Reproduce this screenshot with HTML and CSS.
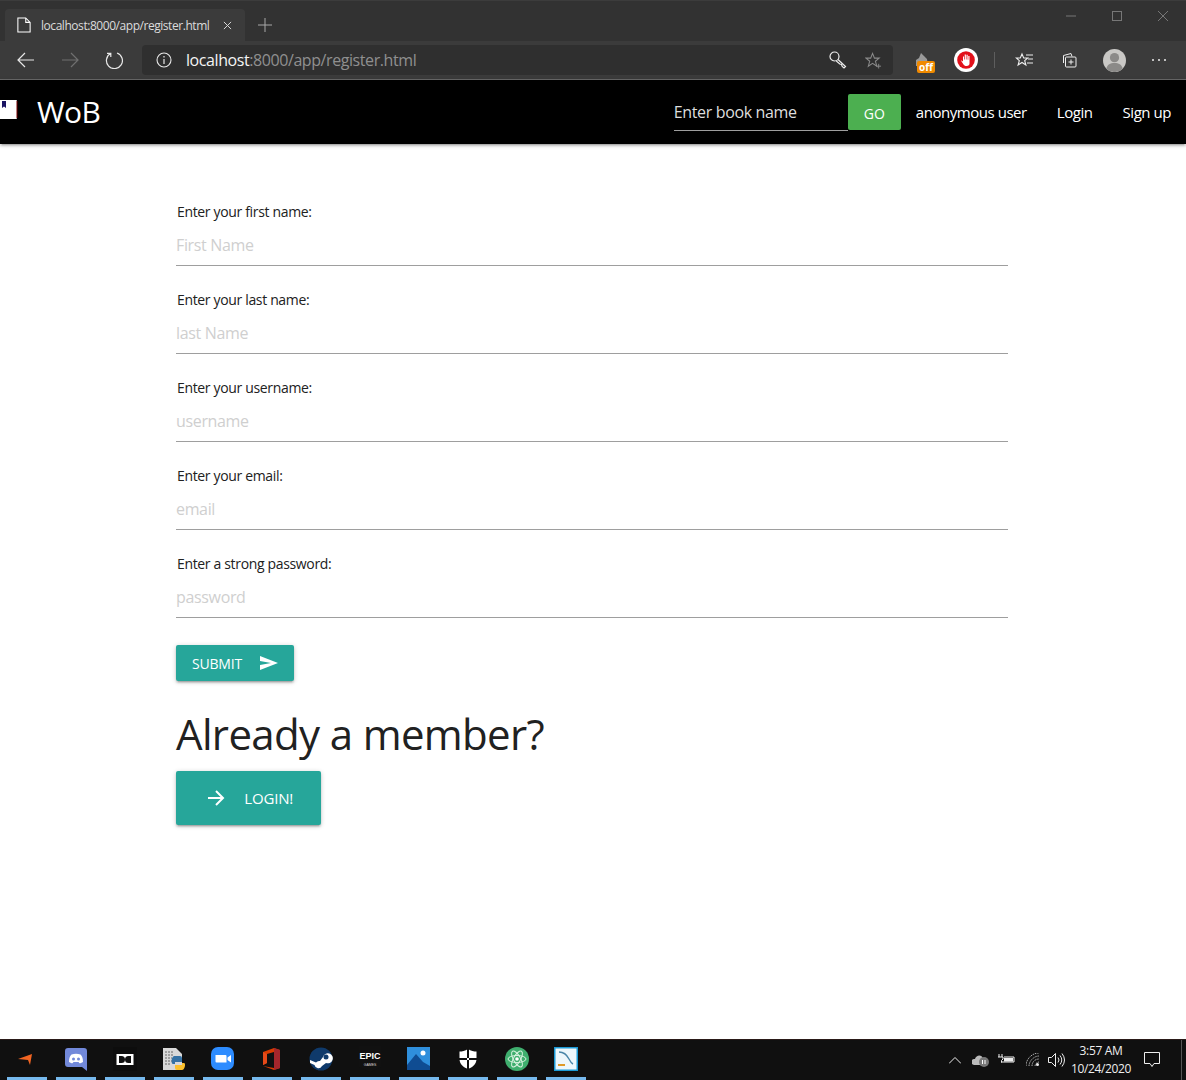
FILE: index.html
```html
<!DOCTYPE html>
<html lang="en">
<head>
<meta charset="utf-8">
<title>WoB</title>
<link rel="stylesheet" href="styles.css">
</head>
<body>
<div class="screen">
  <header class="browser">
    <div class="tabstrip">
      <div class="tab">
        <svg class="ic16" viewBox="0 0 16 18" width="14" height="16"><path d="M1 1h9l5 5v11H1z M10 1v5h5" fill="none" stroke="#fff" stroke-width="1.2"/></svg>
        <span class="tab-title">localhost:8000/app/register.html</span>
        <svg viewBox="0 0 10 10" width="9" height="9"><path d="M1 1l8 8M9 1l-8 8" stroke="#d8d8d8" stroke-width="1.1"/></svg>
      </div>
      <svg class="newtab" viewBox="0 0 14 14" width="14" height="14"><path d="M7 0v14M0 7h14" stroke="#a8a8a8" stroke-width="1"/></svg>
      <div class="winctl">
        <svg viewBox="0 0 10 10" width="10" height="10"><path d="M0 5h10" stroke="#777"/></svg>
        <svg viewBox="0 0 10 10" width="10" height="10"><rect x=".5" y=".5" width="9" height="9" fill="none" stroke="#777"/></svg>
        <svg viewBox="0 0 10 10" width="10" height="10"><path d="M0 0l10 10M10 0L0 10" stroke="#777"/></svg>
      </div>
    </div>
    <div class="toolbar">
      <svg class="navbtn" viewBox="0 0 18 16" width="18" height="16"><path d="M17 8H1M8 1L1 8l7 7" fill="none" stroke="#e8e8e8" stroke-width="1.2"/></svg>
      <svg class="navbtn" viewBox="0 0 18 16" width="18" height="16"><path d="M1 8h16M10 1l7 7-7 7" fill="none" stroke="#707070" stroke-width="1.2"/></svg>
      <svg class="navbtn" viewBox="0 0 18 18" width="18" height="18"><path d="M5.5 2.6A8 8 0 1 0 12 2M5.8 6V2.4H2" fill="none" stroke="#e8e8e8" stroke-width="1.2"/></svg>
      <div class="omnibox">
        <svg viewBox="0 0 16 16" width="16" height="16"><circle cx="8" cy="8" r="7" fill="none" stroke="#e8e8e8" stroke-width="1.1"/><path d="M8 7v5M8 4v1.5" stroke="#e8e8e8" stroke-width="1.2"/></svg>
        <span class="url"><span class="host">localhost</span>:8000/app/register.html</span>
        <svg class="key" viewBox="0 0 18 18" width="18" height="18"><circle cx="5.5" cy="5.5" r="4.5" fill="none" stroke="#eee" stroke-width="1.2"/><path d="M9 8.5l7.5 7-1.5 1.5-1.8-1.5-.7-2-1.7-.5-3.5-3" fill="none" stroke="#eee" stroke-width="1.2"/></svg>
        <svg class="star" viewBox="0 0 18 18" width="17" height="17"><path d="M8 1.5l2 5h5l-4 3.3 1.5 5.2L8 12l-4.500 3 1.500-5.200L1 6.500h5z" fill="none" stroke="#8a8a8a" stroke-width="1.100"/><path d="M12 15h5M14.500 12.500v5" stroke="#8a8a8a"/></svg>
      </div>
      <div class="ext-off">
        <svg viewBox="0 0 18 14" width="18" height="14"><path d="M2 13V7l3-2 2-5 3 3 3 3 1 7z" fill="#9a9a9a"/></svg>
        <span class="off-badge">off</span>
      </div>
      <svg class="ext-block" viewBox="0 0 24 24" width="24" height="24"><circle cx="12" cy="12" r="12" fill="#fff"/><circle cx="12" cy="12" r="8.800" fill="#e2101a"/><path d="M7.500 12.500l1.500 1V8.500h1v3h.7V6.500h1.200v5h.6V6.800h1.200v5h.6V8h1.200v7.500c0 1.500-1 2.500-3 2.500-2.500 0-3-1.500-5.500-5.500z" fill="#fff"/></svg>
      <span class="sep"></span>
      <svg class="favs" viewBox="0 0 18 16" width="18" height="16"><path d="M7 2l1.700 4h4l-3 2.700 1.200 4.300L7 10.500 3.100 13l1.200-4.300-3-2.700h4z" fill="none" stroke="#eee" stroke-width="1.100"/><path d="M11 3h7M13 7h5M12 11h6" stroke="#eee"/></svg>
      <svg class="colls" viewBox="0 0 16 16" width="16" height="16"><path d="M2.500 11V3.500L10 1.500l1 3" fill="none" stroke="#eee"/><rect x="4.500" y="5" width="10.500" height="10" rx="1" fill="#3b3b3b" stroke="#eee"/><path d="M10 7.500v5M7.500 10h5" stroke="#eee"/></svg>
      <svg class="avatar" viewBox="0 0 24 24" width="23" height="23"><circle cx="12" cy="12" r="12" fill="#c9c8c5"/><circle cx="12" cy="9" r="4.800" fill="#8b8a88"/><path d="M3.500 20.500c1-4.500 4-6 8.500-6s7.500 1.500 8.500 6a12 12 0 0 1-17 0z" fill="#8b8a88"/></svg>
      <svg class="more" viewBox="0 0 16 4" width="16" height="4"><circle cx="2" cy="2" r="1" fill="#eee"/><circle cx="8" cy="2" r="1" fill="#eee"/><circle cx="14" cy="2" r="1" fill="#eee"/></svg>
    </div>
  </header>

  <nav class="navbar">
    <div class="brand">
      <svg viewBox="0 0 18 20" width="18" height="20"><path d="M0 1h16a1 1 0 0 1 1 1v17a1 1 0 0 1-1 1H0z" fill="#fff"/><path d="M17 2v17" stroke="#7a0000"/><path d="M2 2h4v7L4 7.500 2 9z" fill="#1b1464"/></svg>
      <span class="brand-name">WoB</span>
    </div>
    <div class="nav-right">
      <input class="search" type="text" placeholder="Enter book name">
      <button class="go" type="button">GO</button>
      <a class="nav-link" href="#">anonymous user</a>
      <a class="nav-link" href="#">Login</a>
      <a class="nav-link" href="#">Sign up</a>
    </div>
  </nav>

  <main class="content">
    <form class="form">
      <label class="field"><span class="lbl">Enter your first name:</span><input type="text" placeholder="First Name"></label>
      <label class="field"><span class="lbl">Enter your last name:</span><input type="text" placeholder="last Name"></label>
      <label class="field"><span class="lbl">Enter your username:</span><input type="text" placeholder="username"></label>
      <label class="field"><span class="lbl">Enter your email:</span><input type="text" placeholder="email"></label>
      <label class="field"><span class="lbl">Enter a strong password:</span><input type="password" placeholder="password"></label>
      <button class="btn submit" type="button">SUBMIT
        <svg viewBox="0 0 18 14" width="18" height="14"><path d="M0 0l18 7-18 7 0-5 11-2L0 5z" fill="#fff"/></svg>
      </button>
    </form>
    <h2 class="member">Already a member?</h2>
    <button class="btn login" type="button">
      <svg viewBox="0 0 18 16" width="18" height="16"><path d="M1 8h15M9 1l7 7-7 7" fill="none" stroke="#fff" stroke-width="2"/></svg>
      LOGIN!
    </button>
  </main>

  <footer class="taskbar">
    <div class="apps">
      <div class="app"><svg viewBox="0 0 24 24" width="24" height="24"><path d="M3 12l14-5-2 11-2-5z" fill="#f26522"/></svg></div>
      <div class="app"><svg viewBox="0 0 24 24" width="24" height="24"><path d="M4 1h16a3 3 0 0 1 3 3v20l-5-4H4a3 3 0 0 1-3-3V4a3 3 0 0 1 3-3z" fill="#7289da"/><path d="M5 15c0-4 1-6 2.500-7.500C10.500 6.500 13.500 6.500 16.500 7.500 18 9 19 11 19 15c-1.500 1-2.500 1.300-3.500 1.300l-1-1.300H9.500l-1 1.300C7.500 16.300 6.500 16 5 15z" fill="#fff"/><circle cx="9.500" cy="12" r="1.500" fill="#7289da"/><circle cx="14.500" cy="12" r="1.500" fill="#7289da"/></svg></div>
      <div class="app"><svg viewBox="0 0 24 24" width="24" height="24"><rect width="24" height="24" fill="#0d0d0d"/><rect x="3.500" y="7" width="17" height="11" fill="#fff"/><path d="M6 9h2.500a3.500 3.500 0 0 1 0 7H6zM18 9h-2.500a3.500 3.500 0 0 0 0 7H18z" fill="#111"/></svg></div>
      <div class="app"><svg viewBox="0 0 24 24" width="24" height="24"><path d="M1 1h13l6 6v16H1z" fill="#d9d9d9"/><path d="M3 5h9M3 8h9M3 11h7M3 14h7M3 17h6" stroke="#666" stroke-dasharray="2 1"/><path d="M12 9h6a2 2 0 0 1 2 2v4h-7v2h-2c-2 0-2-7 1-8z" fill="#3572a5"/><path d="M20 23h-5a2 2 0 0 1-2-2v-3h7v-2h2c2 0 1 7-2 7z" fill="#fbc02d"/></svg></div>
      <div class="app"><svg viewBox="0 0 24 24" width="24" height="24"><rect width="23" height="23" rx="7" fill="#2d8cff"/><path d="M4.500 8h10a1 1 0 0 1 1 1v6.500h-10a1 1 0 0 1-1-1z" fill="#fff"/><path d="M16.500 10.500l3.500-2.500v7.500l-3.500-2.500z" fill="#fff"/></svg></div>
      <div class="app"><svg viewBox="0 0 24 24" width="24" height="24"><path d="M3 5l11-4 6 2v18l-6 2-11-4 11 2V5l-7 2v9l-4 2z" fill="#d83b01"/><path d="M14 1l6 2v18l-6 2z" fill="#a4262c"/><path d="M3 5l4 2v9l-4 2z" fill="#e64a19"/></svg></div>
      <div class="app"><svg viewBox="0 0 24 24" width="24" height="24"><circle cx="12" cy="12" r="11.500" fill="#0f3a6b"/><path d="M1 13l6 2.500A4 4 0 0 1 11 14l3-4a5 5 0 1 1 3 6l-4 3a4 4 0 0 1-7.500-1L1 16z" fill="#fff"/><circle cx="17" cy="10" r="2.500" fill="#0f3a6b"/></svg></div>
      <div class="app"><svg viewBox="0 0 24 26" width="24" height="26"><path d="M1 0h22v21l-11 5-11-5z" fill="#111"/><text x="12" y="13" class="epic">EPIC</text><text x="12" y="20" class="games">GAMES</text></svg></div>
      <div class="app"><svg viewBox="0 0 24 24" width="24" height="24"><rect width="23" height="23" fill="#2f8fdc"/><circle cx="16" cy="6" r="2.500" fill="#fff"/><path d="M0 23V18l9-11 7 8 7 4v4z" fill="#0f4c92"/></svg></div>
      <div class="app"><svg viewBox="0 0 24 24" width="24" height="24"><path d="M12 2c3 2 6 2.500 8.500 2.500V12c0 5-4 8.500-8.500 10C7.500 20.500 3.500 17 3.500 12V4.500C6 4.500 9 4 12 2z" fill="#fff"/><path d="M11 2v20h2V2zM3 11h18v2H3z" fill="#111"/></svg></div>
      <div class="app"><svg viewBox="0 0 24 24" width="24" height="24"><circle cx="12" cy="12" r="12" fill="#3fae6e"/><g fill="none" stroke="#d8f2df" stroke-width="1"><ellipse cx="12" cy="12" rx="9" ry="3.500"/><ellipse cx="12" cy="12" rx="9" ry="3.500" transform="rotate(60 12 12)"/><ellipse cx="12" cy="12" rx="9" ry="3.500" transform="rotate(120 12 12)"/></g><circle cx="12" cy="12" r="1.800" fill="#fff"/></svg></div>
      <div class="app"><svg viewBox="0 0 24 24" width="24" height="24"><rect x=".75" y=".75" width="22.500" height="22.500" fill="#eef7fb" stroke="#1b9ad6" stroke-width="1.500"/><path d="M5 5c4 0 8 3 10 7 1 2 2 4 4 5" fill="none" stroke="#4a86a8" stroke-width="1.400"/><path d="M4 18h7" stroke="#e09a28" stroke-width="2"/></svg></div>
    </div>
    <div class="tray">
      <svg viewBox="0 0 12 7" width="12" height="7"><path d="M0 6.500L6 .5l6 6" fill="none" stroke="#eee"/></svg>
      <svg class="tray-cloud" viewBox="0 0 18 14" width="18" height="14"><path d="M2 12a3 3 0 0 1 1-6c1-4 7-5 8 0h2v6z" fill="#bbb"/><circle cx="12" cy="9" r="5" fill="#777"/><path d="M10.500 7v4M13 7v4" stroke="#fff"/></svg>
      <svg class="tray-batt" viewBox="0 0 17 12" width="17" height="12"><path d="M1 0v3M4 0v3M0 3h5v2l-1.500 1.500v2M3 8h13V3H6" fill="none" stroke="#eee"/><rect x="6" y="4" width="9" height="3.500" fill="#eee"/></svg>
      <svg class="tray-wifi" viewBox="0 0 14 14" width="14" height="14"><path d="M0 13C0 6 6 0 13 0M3 13c0-5 5-10 10-10M6 13c0-4 3-7 7-7M9 13c0-2 2-4 4-4" fill="none" stroke="#aaa" stroke-dasharray="1.500 .8"/><circle cx="11.500" cy="11.500" r="1.500" fill="#eee"/></svg>
      <svg class="tray-vol" viewBox="0 0 17 14" width="17" height="14"><path d="M.5 4.500h3L7.500.5v13l-4-4h-3z" fill="none" stroke="#eee"/><path d="M10 4.500q2 2.500 0 5M12 2.500q3.500 4.500 0 9M14 .5q5 6.500 0 13" fill="none" stroke="#eee"/></svg>
      <div class="clock"><span>3:57 AM</span><span>10/24/2020</span></div>
      <svg class="notif" viewBox="0 0 16 16" width="16" height="16"><path d="M.5.500h15v11H10l-2 3-2-3H.5z" fill="none" stroke="#eee"/></svg>
      <span class="show-desk"></span>
    </div>
  </footer>
</div>
</body>
</html>
```

FILE: styles.css
```css
* { box-sizing: border-box; }
html, body { margin: 0; padding: 0; }
body { font-family: "Open Sans", "Noto Sans", sans-serif; background: #fff; color: #212121; }
.screen { width: 1186px; height: 1080px; display: flex; flex-direction: column; overflow: hidden; }

.browser { height: 80px; flex: none; background: #333; border-top: 1px solid #3c3c3c; border-bottom: 1px solid #6a6a6a; }
.tabstrip { height: 40px; display: flex; align-items: flex-end; padding-left: 5px; background: #323232; }
.tab { width: 240px; height: 32px; background: #3b3b3b; border-radius: 4px 4px 0 0; display: flex; align-items: center; gap: 10px; padding: 0 13px 0 12px; color: #dcdcdc; }
.tab-title { font-size: 12px; letter-spacing: -.45px; flex: 1; white-space: nowrap; }
.newtab { margin: 0 0 9px 13px; }
.winctl { margin-left: auto; align-self: flex-start; display: flex; gap: 36px; padding: 10px 18px 0 0; }

.toolbar { height: 38px; background: #3b3b3b; display: flex; align-items: center; padding: 0 0 0 17px; }
.navbtn { margin-right: 26px; flex: none; }
.navbtn:nth-child(3) { margin-right: 19px; }
.omnibox { width: 751px; height: 30px; border-radius: 4px; background: #2f2f2f; display: flex; align-items: center; padding: 0 11px 0 14px; }
.url { font-size: 16px; letter-spacing: -.42px; color: #8f8f8f; margin-left: 14px; flex: 1; white-space: nowrap; }
.host { color: #f4f4f4; }
.key { margin-right: 18px; }
.ext-off { position: relative; width: 24px; height: 22px; margin-left: 21px; margin-top: 2px; }
.off-badge { position: absolute; left: 3px; top: 11px; width: 18px; height: 12px; border-radius: 2px; background: #f08a00; color: #fff; font: bold 10px/12px "Open Sans", sans-serif; text-align: center; }
.ext-block { margin-left: 16px; flex: none; }
.sep { width: 1px; height: 16px; background: #5e5e5e; margin-left: 16px; }
.favs { margin-left: 20px; flex: none; }
.colls { margin-left: 28px; flex: none; }
.avatar { margin-left: 26px; flex: none; }
.more { margin-left: 25px; flex: none; }

.navbar { height: 64px; flex: none; background: #000; color: #fff; display: flex; align-items: center; justify-content: space-between; box-shadow: 0 2px 2px 0 rgba(0,0,0,.14), 0 3px 1px -2px rgba(0,0,0,.12), 0 1px 5px 0 rgba(0,0,0,.2); position: relative; }
.brand { display: flex; align-items: center; gap: 19px; }
.brand svg { margin-top: -6px; }
.brand-name { font-size: 30px; line-height: 40px; letter-spacing: -.6px; font-weight: 400; }
.nav-right { display: flex; align-items: center; height: 100%; padding-right: 15px; }
.search { width: 174px; height: 38px; margin-top: 0; background: transparent; border: 0; border-bottom: 1px solid #9e9e9e; padding: 0; color: #fff; font: 16px "Open Sans", sans-serif; letter-spacing: -.35px; outline: none; }
.search::placeholder { color: #dedede; opacity: 1; }
.go { width: 53px; height: 36px; background: #4caf50; color: #fff; border: 0; border-radius: 2px; font: 14px "Open Sans", sans-serif; padding: 3px 0 0; }
.nav-link { color: #fff; text-decoration: none; font-size: 15px; letter-spacing: -.45px; margin-left: 30px; white-space: nowrap; }
.go + .nav-link { margin-left: 15px; }

.content { flex: 1; padding: 56px 178px 0 176px; }
.form { display: flex; flex-direction: column; }
.field { display: flex; flex-direction: column; height: 88px; }
.lbl { font-size: 14px; line-height: 24px; letter-spacing: -.34px; color: #212121; padding-left: 1px; }
.field input { height: 42px; margin-top: 0; border: 0; border-bottom: 1px solid #9e9e9e; padding: 0; font: 16px "Open Sans", sans-serif; letter-spacing: -.34px; outline: none; background: transparent; }
.field input::placeholder { color: #cfcfcf; opacity: 1; }
.btn { display: flex; align-items: center; background: #26a69a; color: #fff; border: 0; border-radius: 2px; font-family: "Open Sans", sans-serif; box-shadow: 0 2px 2px 0 rgba(0,0,0,.14), 0 3px 1px -2px rgba(0,0,0,.12), 0 1px 5px 0 rgba(0,0,0,.2); }
.submit { width: 118px; height: 36px; margin-top: 5px; padding: 0 16px; font-size: 14px; letter-spacing: -.2px; justify-content: space-between; }
.member { font-size: 42px; line-height: 56px; font-weight: 400; letter-spacing: -.65px; margin: 25px 0 9px; color: #212121; }
.login { width: 145px; height: 54px; padding: 0 28px 0 31px; font-size: 15px; letter-spacing: -.2px; justify-content: space-between; }

.taskbar { height: 41px; flex: none; background: #101010; color: #eee; display: flex; justify-content: space-between; border-top: 1px solid #2a1a18; }
.apps { display: flex; gap: 9px; padding-left: 7px; }
.app { width: 40px; height: 40px; display: flex; align-items: center; justify-content: center; border-bottom: 3px solid #76b9ed; padding-top: 1px; }
.tray { display: flex; align-items: center; padding-right: 0; }
.tray-cloud { margin-left: 11px; }
.tray-batt { margin-left: 8px; }
.tray-wifi { margin-left: 11px; }
.tray-vol { margin-left: 8px; }
.clock { display: flex; flex-direction: column; align-items: center; font-size: 12px; line-height: 18px; letter-spacing: -.35px; margin-left: 6px; width: 60px; }
.notif { margin-left: 13px; }
.show-desk { width: 1px; height: 40px; background: #555; margin-left: 21px; margin-right: 4px; }
.epic { font: bold 9px "Liberation Sans Narrow", "Liberation Sans", sans-serif; fill: #fff; text-anchor: middle; }
.games { font: 3.500px "Liberation Sans", sans-serif; fill: #ddd; text-anchor: middle; }
```
